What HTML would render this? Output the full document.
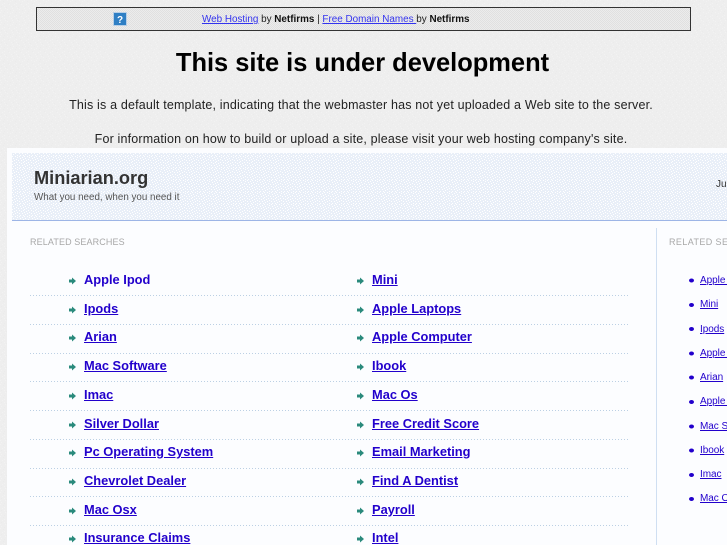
<!DOCTYPE html>
<html>
<head>
<meta charset="utf-8">
<style>
html,body{margin:0;padding:0;width:727px;height:545px;overflow:hidden;background:#eeeeee;}
body{position:relative;font-family:"Liberation Sans",Arial,sans-serif;color:#222;}
.t{position:absolute;white-space:nowrap;line-height:16px;}
a{color:#2200cc;text-decoration:underline;}
#top{position:absolute;left:36px;top:7px;width:653px;height:22px;border:1px solid #333;background:#e6e6e6;}
.m{font-size:12.85px;font-weight:bold;}
.s{font-size:10px;letter-spacing:-.05px;color:#2200cc;}
.dl{position:absolute;left:30px;width:598px;height:1px;background:repeating-linear-gradient(90deg,#bcd0e4 0,#bcd0e4 1px,transparent 1px,transparent 3px);}
#clip{position:absolute;left:0;top:0;width:727px;height:545px;overflow:hidden;}
</style>
</head>
<body>
<div id="clip">
<svg width="727" height="545" style="position:absolute;left:0;top:0">
<defs>
<pattern id="d" width="12" height="12" patternUnits="userSpaceOnUse">
<rect width="12" height="12" fill="#e9eff8"/>
<path fill="#ffffff" d="M0 0h1v1h-1zM3 0h1v1h-1zM7 0h1v1h-1zM5 1h1v1h-1zM10 1h1v1h-1zM1 2h1v1h-1zM8 2h1v1h-1zM4 3h1v1h-1zM11 3h1v1h-1zM2 4h1v1h-1zM6 4h1v1h-1zM9 4h1v1h-1zM0 5h1v1h-1zM4 6h1v1h-1zM7 6h1v1h-1zM11 6h1v1h-1zM2 7h1v1h-1zM9 7h1v1h-1zM5 8h1v1h-1zM0 8h1v1h-1zM7 9h1v1h-1zM3 9h1v1h-1zM10 9h1v1h-1zM1 10h1v1h-1zM5 11h1v1h-1zM8 11h1v1h-1zM11 11h1v1h-1z"/>
</pattern>
<pattern id="g" width="2" height="2" patternUnits="userSpaceOnUse">
<rect width="2" height="2" fill="#e0e0e0"/>
<rect width="1" height="1" fill="#ececec"/>
<rect x="1" y="1" width="1" height="1" fill="#ececec"/>
</pattern>
<pattern id="n" width="12" height="12" patternUnits="userSpaceOnUse">
<rect width="12" height="12" fill="#eeeeee"/>
<path fill="#f2f2f2" d="M0 0h1v1h-1zM7 0h1v1h-1zM10 1h1v1h-1zM4 3h1v1h-1zM2 4h1v1h-1zM9 4h1v1h-1zM4 6h1v1h-1zM11 6h1v1h-1zM5 8h1v1h-1zM0 8h1v1h-1zM7 9h1v1h-1zM1 10h1v1h-1z"/>
<path fill="#ebebeb" d="M3 1h1v1h-1zM8 3h1v1h-1zM1 6h1v1h-1zM6 7h1v1h-1zM10 10h1v1h-1zM4 11h1v1h-1z"/>
</pattern>
</defs>
<rect width="727" height="545" fill="url(#n)"/>
<rect x="7" y="148" width="720" height="397" fill="#fcfdff"/>
<rect x="12" y="153" width="715" height="67" fill="url(#d)"/>
<rect x="12" y="220" width="715" height="1" fill="#9db5e6"/>
<rect x="656" y="228" width="1" height="317" fill="#cfdff2"/>
</svg>
<div id="top"><svg width="653" height="22" style="position:absolute;left:0;top:0"><rect width="653" height="22" fill="url(#g)"/></svg></div>
<svg width="14" height="14" style="position:absolute;left:113px;top:12px">
<rect x="0" y="0" width="14" height="14" fill="#b8cfe6"/>
<rect x="1" y="1" width="12" height="12" fill="#2f7fc4"/>
<text x="7" y="11" font-size="10" font-weight="bold" text-anchor="middle" font-family="Liberation Sans" fill="#fff">?</text>
</svg>
<div class="t" style="left:202px;top:12px;font-size:9.9px;color:#222"><a href="#" style="color:#3333ee">Web Hosting</a> by <b style="color:#111">Netfirms</b> | <a href="#" style="color:#3333ee">Free Domain Names </a> by <b style="color:#111">Netfirms</b></div>
<div class="t" style="left:0;width:725px;text-align:center;top:47px;line-height:32px;font-size:25.45px;font-weight:bold;color:#000">This site is under development</div>
<div class="t" style="left:0;width:722px;text-align:center;top:97px;font-size:12.5px;letter-spacing:.17px;color:#222">This is a default template, indicating that the webmaster has not yet uploaded a Web site to the server.</div>
<div class="t" style="left:0;width:722px;text-align:center;top:131px;font-size:12.5px;letter-spacing:.17px;color:#222">For information on how to build or upload a site, please visit your web hosting company's site.</div>

<div class="t" style="left:34px;top:167px;line-height:22px;font-size:18.2px;font-weight:bold;color:#333">Miniarian.org</div>
<div class="t" style="left:34px;top:190px;font-size:9.8px;color:#555">What you need, when you need it</div>
<div class="t" style="left:716px;top:177px;font-size:10px;color:#333">June</div>
<div class="t" style="left:30px;top:234px;font-size:9px;letter-spacing:.12px;color:#a8a8a8">RELATED SEARCHES</div>
<div class="t" style="left:669px;top:234px;font-size:9px;letter-spacing:.4px;color:#a8a8a8">RELATED SEARCHES</div>

<div class="dl" style="top:295px"></div>
<div class="dl" style="top:324px"></div>
<div class="dl" style="top:353px"></div>
<div class="dl" style="top:381px"></div>
<div class="dl" style="top:410px"></div>
<div class="dl" style="top:439px"></div>
<div class="dl" style="top:468px"></div>
<div class="dl" style="top:496px"></div>
<div class="dl" style="top:525px"></div>

<svg width="727" height="545" style="position:absolute;left:0;top:0" fill="#2a8a7c">
<defs><path id="ar" d="M0 2h3V0l4 3.5L3 7V5H0z"/></defs>
<use href="#ar" x="69" y="277.5"/><use href="#ar" x="357" y="277.5"/>
<use href="#ar" x="69" y="306.5"/><use href="#ar" x="357" y="306.5"/>
<use href="#ar" x="69" y="334.5"/><use href="#ar" x="357" y="334.5"/>
<use href="#ar" x="69" y="363.5"/><use href="#ar" x="357" y="363.5"/>
<use href="#ar" x="69" y="392.5"/><use href="#ar" x="357" y="392.5"/>
<use href="#ar" x="69" y="421.5"/><use href="#ar" x="357" y="421.5"/>
<use href="#ar" x="69" y="449.5"/><use href="#ar" x="357" y="449.5"/>
<use href="#ar" x="69" y="478.5"/><use href="#ar" x="357" y="478.5"/>
<use href="#ar" x="69" y="507.5"/><use href="#ar" x="357" y="507.5"/>
<use href="#ar" x="69" y="535.5"/><use href="#ar" x="357" y="535.5"/>
<g fill="#2200cc">
<ellipse cx="691.5" cy="280.5" rx="2.5" ry="2"/><ellipse cx="691.5" cy="305" rx="2.5" ry="2"/><ellipse cx="691.5" cy="329" rx="2.5" ry="2"/><ellipse cx="691.5" cy="353.5" rx="2.5" ry="2"/><ellipse cx="691.5" cy="377.5" rx="2.5" ry="2"/><ellipse cx="691.5" cy="402" rx="2.5" ry="2"/><ellipse cx="691.5" cy="426.5" rx="2.5" ry="2"/><ellipse cx="691.5" cy="450.5" rx="2.5" ry="2"/><ellipse cx="691.5" cy="475" rx="2.5" ry="2"/><ellipse cx="691.5" cy="499" rx="2.5" ry="2"/>
</g>
</svg>

<div class="t m" style="left:84px;top:272px;"><a href="#" style="text-decoration:none">Apple Ipod</a></div>
<div class="t m" style="left:84px;top:301px"><a href="#">Ipods</a></div>
<div class="t m" style="left:84px;top:329px"><a href="#">Arian</a></div>
<div class="t m" style="left:84px;top:358px"><a href="#">Mac Software</a></div>
<div class="t m" style="left:84px;top:387px"><a href="#">Imac</a></div>
<div class="t m" style="left:84px;top:416px"><a href="#">Silver Dollar</a></div>
<div class="t m" style="left:84px;top:444px"><a href="#">Pc Operating System</a></div>
<div class="t m" style="left:84px;top:473px"><a href="#">Chevrolet Dealer</a></div>
<div class="t m" style="left:84px;top:502px"><a href="#">Mac Osx</a></div>
<div class="t m" style="left:84px;top:530px"><a href="#">Insurance Claims</a></div>

<div class="t m" style="left:372px;top:272px"><a href="#">Mini</a></div>
<div class="t m" style="left:372px;top:301px"><a href="#">Apple Laptops</a></div>
<div class="t m" style="left:372px;top:329px"><a href="#">Apple Computer</a></div>
<div class="t m" style="left:372px;top:358px"><a href="#">Ibook</a></div>
<div class="t m" style="left:372px;top:387px"><a href="#">Mac Os</a></div>
<div class="t m" style="left:372px;top:416px"><a href="#">Free Credit Score</a></div>
<div class="t m" style="left:372px;top:444px"><a href="#">Email Marketing</a></div>
<div class="t m" style="left:372px;top:473px"><a href="#">Find A Dentist</a></div>
<div class="t m" style="left:372px;top:502px"><a href="#">Payroll</a></div>
<div class="t m" style="left:372px;top:530px"><a href="#">Intel</a></div>

<div class="t s" style="left:700px;top:273px"><a href="#">Apple Ipod</a></div>
<div class="t s" style="left:700px;top:297px"><a href="#">Mini</a></div>
<div class="t s" style="left:700px;top:322px"><a href="#">Ipods</a></div>
<div class="t s" style="left:700px;top:346px"><a href="#">Apple Laptops</a></div>
<div class="t s" style="left:700px;top:370px"><a href="#">Arian</a></div>
<div class="t s" style="left:700px;top:394px"><a href="#">Apple Computer</a></div>
<div class="t s" style="left:700px;top:419px"><a href="#">Mac Software</a></div>
<div class="t s" style="left:700px;top:443px"><a href="#">Ibook</a></div>
<div class="t s" style="left:700px;top:467px"><a href="#">Imac</a></div>
<div class="t s" style="left:700px;top:491px"><a href="#">Mac Os</a></div>
</div>
</body>
</html>
